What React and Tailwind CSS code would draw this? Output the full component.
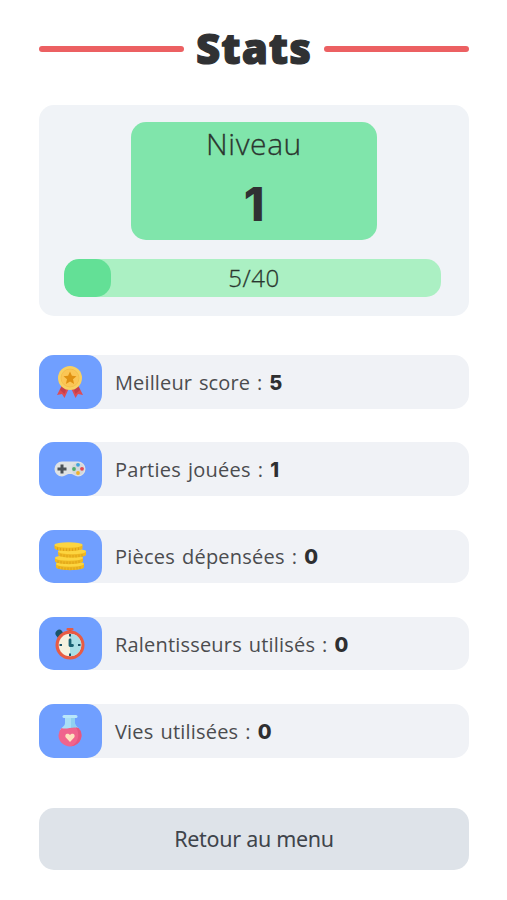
const fontBody = "font-['Open_Sans','Noto_Sans',sans-serif]"

function MedalIcon() {
  return (
    <svg viewBox="0 0 32 32" className="size-8">
      <path d="M8 19 L3 29 L8 28 L10.500 32 L15 22 Z" fill="#dd4c55" />
      <path d="M24 19 L29 29 L24 28 L21.500 32 L17 22 Z" fill="#dd4c55" />
      <path d="M8 20 L12 24 L10.500 28 L6 24 Z M24 20 L20 24 L21.500 28 L26 24 Z" fill="#c43f4d" />
      <circle cx="16" cy="12" r="12" fill="#f8d062" />
      <circle cx="16" cy="12" r="9" fill="#fbc655" stroke="#f2bd49" strokeWidth="0.800" />
      <path d="M16 5.500 L17.900 9.800 L22.500 10.200 L19 13.300 L20.100 17.900 L16 15.500 L11.900 17.900 L13 13.300 L9.500 10.200 L14.100 9.800 Z" fill="#e09112" />
    </svg>
  )
}

function GamepadIcon() {
  return (
    <svg viewBox="0 0 32 32" className="size-8">
      <path d="M8 8.500 H24 A7.500 7.500 0 0 1 24 23.500 C21 23.500 19.500 21 17.500 21 H14.500 C12.500 21 11 23.500 8 23.500 A7.500 7.500 0 0 1 8 8.500 Z" fill="#dfe2e3" />
      <circle cx="24" cy="16" r="6.300" fill="#d3d7da" />
      <path d="M6.500 11.500 H9.500 V14.500 H12.500 V17.500 H9.500 V20.500 H6.500 V17.500 H3.500 V14.500 H6.500 Z" fill="#4b5156" />
      <circle cx="24" cy="11.800" r="1.900" fill="#3fa3dc" />
      <circle cx="28" cy="15.800" r="1.900" fill="#e34852" />
      <circle cx="24" cy="20" r="1.900" fill="#efb32b" />
      <circle cx="20" cy="16" r="1.900" fill="#4fab70" />
    </svg>
  )
}

function CoinsIcon() {
  // bottom coin first, so that each one lies on the coin below
  const coins = [
    [2, 21.5],
    [1, 15.5],
    [4, 9],
    [0.5, 2.5],
  ]
  return (
    <svg viewBox="0 0 32 32" className="size-8">
      {coins.map(([x, y]) => (
        <g key={y} transform={`translate(${x} ${y})`}>
          <path d="M0 2.500 V6 C2 9.500 26 9.500 28 6 V2.500 Z" fill="#efb821" />
          <path d="M3 5 V7.500 M6 5.500 V8 M9 6 V8.500 M12 6 V8.500 M15 6 V8.500 M18 6 V8.500 M21 5.500 V8 M24 5 V7.500" stroke="#d99d17" strokeWidth="0.800" />
          <ellipse cx="14" cy="2.500" rx="14" ry="2.700" fill="#fcd541" />
        </g>
      ))}
    </svg>
  )
}

function StopwatchIcon() {
  return (
    <svg viewBox="0 0 32 34" className="h-[34px] w-8">
      <path d="M2.500 9 A3.500 3.500 0 0 1 8 4 L9 6 L4 11 Z" fill="#19546a" />
      <path d="M14.500 3 H17.500 V7 H14.500 Z" fill="#c94432" />
      <rect x="12.500" y="1" width="7" height="2.500" rx="1" fill="#e85b43" />
      <circle cx="16" cy="18" r="14.500" fill="#e85b43" />
      <circle cx="16" cy="18" r="11.300" fill="#f5f1df" />
      <path d="M16 6.700 A11.300 11.300 0 0 1 16 29.300 Z" fill="#a9dfe6" />
      <path d="M16 7 V9.500 M16 26.500 V29 M5.500 18 H8 M24 18 H26.500" stroke="#19546a" strokeWidth="2" />
      <path d="M16 13 V18.500 H18.500" fill="none" stroke="#176072" strokeWidth="2.800" strokeLinecap="round" strokeLinejoin="round" />
    </svg>
  )
}

function PotionIcon() {
  return (
    <svg viewBox="0 0 32 32" className="size-8">
      <path d="M11 1 H21 V8 C21 11 24 12 26 15 H6 C8 12 11 11 11 8 Z" fill="#a9def6" />
      <path d="M17 1 H21 V8 C21 11 24 12 26 15 H17 Z" fill="#8fd0f0" />
      <rect x="8.500" y="0" width="15" height="3" rx="1.500" fill="#b9e6fa" />
      <path d="M7.500 13 C12 15 19 11 24.500 13 A11.500 11 0 1 1 7.500 13 Z" fill="#f0648d" />
      <path d="M22 12.400 C23 12.400 24 12.700 24.500 13 A11.500 11 0 0 1 17 31.300 C25 28 26 18 22 12.400 Z" fill="#e5577f" />
      <path d="M16 27 L11.800 22.500 C10 19 14 17.200 16 20 C18 17.200 22 19 20.200 22.500 Z" fill="#fee1bd" />
    </svg>
  )
}

const stats = [
  { label: 'Meilleur score :', value: 5, Icon: MedalIcon, text: 'tracking-[0.13px]' },
  { label: 'Parties jouées :', value: 1, Icon: GamepadIcon, text: 'tracking-[0.25px]' },
  { label: 'Pièces dépensées :', value: 0, Icon: CoinsIcon, text: 'tracking-[0.23px]' },
  { label: 'Ralentisseurs utilisés :', value: 0, Icon: StopwatchIcon, text: 'tracking-[0.19px]' },
  { label: 'Vies utilisées :', value: 0, Icon: PotionIcon, text: 'tracking-[0.2px]' },
]

function StatRow({ label, value, Icon, text }) {
  return (
    <li className="flex h-[53.500px] items-center rounded-[15px] bg-[#f0f2f6]">
      <div className="flex h-full w-[63px] shrink-0 items-center justify-center rounded-[15px] bg-[#709fff] pr-px">
        <Icon />
      </div>
      <p className="flex items-baseline gap-[7px] pt-[2px] pl-[13px] text-[20px] whitespace-nowrap text-[#4b4c4f]">
        <span className={`[word-spacing:1.5px] ${text}`}>{label}</span>
        <strong className="font-['Inter',sans-serif] text-[20px] font-extrabold text-[#2e2f31]">{value}</strong>
      </p>
    </li>
  )
}

export default function App() {
  const score = 5
  const goal = 40

  return (
    <main className={`flex h-[900px] w-full flex-col bg-white pr-[38px] pl-[39px] ${fontBody}`}>
      {/* Title */}
      <header className="flex h-[98px] items-center justify-between">
        <span className="h-[6px] w-[145px] rounded-[3px] bg-[#ec6062]" />
        <h1 className="pb-[3px] text-[42px] leading-none font-extrabold tracking-[1px] text-[#303133] [-webkit-text-stroke:1.2px_#303133]">
          Stats
        </h1>
        <span className="h-[6px] w-[145px] rounded-[3px] bg-[#ec6062]" />
      </header>

      {/* Level */}
      <section className="mt-[7px] flex h-[211px] shrink-0 flex-col items-center rounded-[15px] bg-[#f0f3f7] pt-[17px]">
        <div className="flex h-[117.500px] w-[246px] flex-col items-center rounded-[15px] bg-[#80e5ab] text-[#2b3530]">
          <h2 className="mt-px text-[30px] leading-[42px] font-light tracking-[0.6px] [-webkit-text-stroke:0.3px_#2b3530]">
            Niveau
          </h2>
          <strong className="mt-[9px] font-['Inter',sans-serif] text-[47px] leading-[60px] font-extrabold text-[#303133]">1</strong>
        </div>
        <div className="relative mt-[19.500px] mr-[3px] h-[37.500px] w-[377px] overflow-hidden rounded-[15px] bg-[#abf0c3]">
          <div className="h-full rounded-[15px] bg-[#63e096]" style={{ width: `${(score / goal) * 100}%` }} />
          <span className="absolute inset-0 flex items-center justify-center pl-[3px] text-[24px] font-light tracking-[0.500px] text-[#29352e] [-webkit-text-stroke:0.3px_#29352e]">
            {score}/{goal}
          </span>
        </div>
      </section>

      {/* Stats */}
      <ul className="mt-[39px] flex flex-col gap-[33.750px]">
        {stats.map((stat) => (
          <StatRow key={stat.label} {...stat} />
        ))}
      </ul>

      <button className="mt-[50px] h-[62.500px] shrink-0 rounded-[15px] bg-[#dee3e9] pt-px font-['Noto_Sans',sans-serif] text-[21.500px] tracking-[-0.3px] text-[#3e444b]">
        Retour au menu
      </button>
    </main>
  )
}
